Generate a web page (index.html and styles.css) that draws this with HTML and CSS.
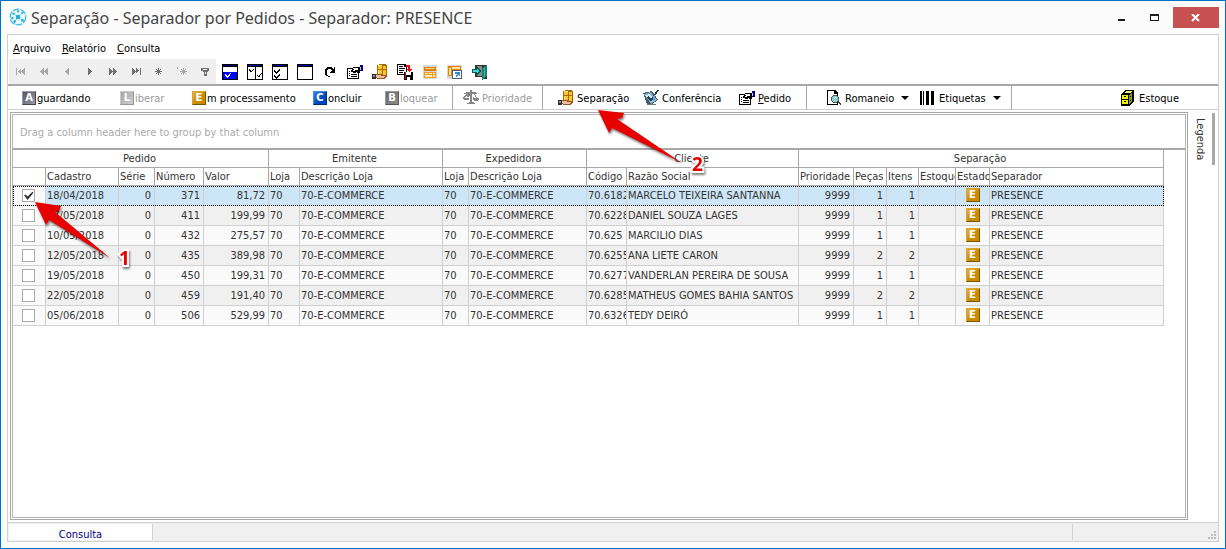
FILE: index.html
```html
<!DOCTYPE html>
<html lang="pt-BR">

<head>
    <meta charset="UTF-8">
    <meta name="viewport" content="width=device-width, initial-scale=1.0">
    <title>Separação - Separador por Pedidos</title>
    <link rel="stylesheet" href="styles.css">
</head>

<body>
    <svg class="sprite" aria-hidden="true">
        <symbol id="nav-first" viewBox="0 0 12 10"><path d="M1 1h1v7H1zM3 4h1V3h1V2h1v5H5V6H4V5H3zM6 4h1V3h1V2h1v5H8V6H7V5H6zM9 1h1v7H9z" /></symbol>
        <symbol id="nav-prevpage" viewBox="0 0 12 10"><path d="M2 4h1V3h1V2h1V1h1v7H5V7H4V6H3V5H2zM6 4h1V3h1V2h1V1h1v7H9V7H8V6H7V5H6z" /></symbol>
        <symbol id="nav-prev" viewBox="0 0 12 10"><path d="M4 4h1V3h1V2h1V1h1v7H7V7H6V6H5V5H4z" /></symbol>
        <symbol id="nav-next" viewBox="0 0 12 10"><path d="M4 1h1v1h1v1h1v1h1v1H7v1H6v1H5v1H4z" /></symbol>
        <symbol id="nav-nextpage" viewBox="0 0 12 10"><path d="M2 1h1v1h1v1h1v1h1v1H5v1H4v1H3v1H2zM6 1h1v1h1v1h1v1h1v1H9v1H8v1H7v1H6z" /></symbol>
        <symbol id="nav-last" viewBox="0 0 12 10"><path d="M2 1h1v1h1v1h1v1h1v1H5v1H4v1H3v1H2zM6 1h1v1h1v1h1v1H8v1H7v1H6zM10 1h1v7h-1z" /></symbol>
        <symbol id="nav-star" viewBox="0 0 12 10"><path d="M5 1h1v7H5zM2 4h7v1H2zM3 2h1v1H3zM7 2h1v1H7zM3 6h1v1H3zM7 6h1v1H7zM4 3h3v3H4z" /></symbol>
        <symbol id="nav-star-off" viewBox="0 0 12 10"><path d="M1 0h1v2H1zM7 1h1v7H7zM4 4h7v1H4zM5 2h1v1H5zM9 2h1v1H9zM5 6h1v1H5zM9 6h1v1H9zM6 3h3v3H6z" /></symbol>
        <symbol id="nav-filter" viewBox="0 0 12 10"><path fill-rule="evenodd" d="M2 1h8v3H9v1H8v4H5V5H4V4H2zM4 2v1h4V2zM6 5v2h1V5z" /></symbol>

        <symbol id="check-half" viewBox="0 0 16 16">
            <path fill="#000" d="M0 0h16v16H0z" /><path fill="#000080" d="M1 1h12v1H1z" /><path fill="#fff" d="M1 3h14v5H1z" /><path fill="#00f" d="M1 8h14v7H1z" />
            <path fill="#fff" d="M3 10h1v1h1v1h1v-1h1v-1h1V9h1v1H8v2H7v1H6v1H5v-1H4v-1H3z" />
        </symbol>
        <symbol id="check-cols" viewBox="0 0 16 16">
            <path fill="#000" d="M0 0h16v16H0z" /><path fill="#00a" d="M1 1h12v1H1z" /><path fill="#fff" d="M1 3h7v12H1zM9 3h6v12H9z" />
            <path fill="#000" d="M2 5h1v1h1v1h1V6h1V5h1v1H6v1H5v1H3V7H2zM10 11h1v1h1v-1h1v-1h1V9h1v1h-1v1h-1v2h-2v-1h-1z" />
        </symbol>
        <symbol id="check-list" viewBox="0 0 16 16">
            <path fill="#000" d="M0 0h16v16H0z" /><path fill="#00a" d="M1 1h12v1H1z" /><path fill="#fff" d="M1 3h14v12H1z" />
            <path fill="#000" d="M2 6h1v1h1v1h1V7h1V6h1V5h1v2H7v1H6v1H5v1H4V9H3V8H2zM2 11h1v1h1v1h1v-1h1v-1h1v-1h1v2H7v1H6v1H5v1H4v-1H3v-1H2z" />
        </symbol>
        <symbol id="blank" viewBox="0 0 16 16"><path fill="#000" d="M0 0h16v16H0z" /><path fill="#00a" d="M1 1h12v1H1z" /><path fill="#fff" d="M1 3h14v12H1z" /></symbol>
        <symbol id="refresh" viewBox="0 0 16 16">
            <path fill="#000" d="M5 3h5v1h1v1h1V3h1v6H8V8h1V7h1V6H9V5H6v1H5v5h1v1h2v1H6v-1H4v-1H3V5h1V4h1z" />
        </symbol>
        <symbol id="props" viewBox="0 0 16 16">
            <path fill="#000" d="M0 4h6V3h7v6h-1v6H0z" /><path fill="#fff" d="M1 5h4v1H4v2h5l2 2v4H1z" />
            <path fill="#000" d="M2 7h1v1H2zM2 9h1v1H2zM2 11h1v1H2zM4 10h6v1H4zM4 12h6v1H4z" /><path fill="#fff" d="M6 4h5v3H6z" />
            <path fill="#000" d="M5 5h2v1H5zM8 6h4v1H8zM6 8h3v1H6z" /><path fill="#000080" d="M13 1h3v6h-3z" /><path fill="#ccc" d="M13 3h1v3h-1z" />
        </symbol>
        <symbol id="hand" viewBox="0 0 16 16">
            <path fill="#a66a00" d="M5 1l3-1h4l3 1v10l-2 2H8l-3-1z" /><path fill="#ffc526" d="M6 1h4v4H6zM6 6h4v5H6zM11 2h3v3h-3zM11 6h3v5h-3z" /><path fill="#ffeb90" d="M6 1h4v1H6zM6 6h1v4H6z" />
            <path fill="#303030" d="M0 10h4v5H0z" /><path fill="#8794a8" d="M1 11h2v2H1z" /><path fill="#9a5330" d="M4 10h5l2 1h3l1 1-2 3H6l-2-1z" /><path fill="#f3bd98" d="M4 11h4l2 1h3l-1 2H6l-2-1z" />
        </symbol>
        <symbol id="save-doc" viewBox="0 0 16 16">
            <path fill="#000" d="M0 0h8l2 2v9H0z" /><path fill="#fff" d="M1 1h6v2h2v7H1z" /><path fill="#000" d="M2 2h4v1H2zM2 4h6v1H2zM2 6h5v1H2zM2 8h4v1H2z" />
            <path fill="#f00" d="M9 1h4v4h2l-3 3-3-3h2V3H9z" /><path fill="#000" d="M7 8h9v8H7z" /><path fill="#fff" d="M9 8h5v3H9zM10 13h3v3h-3z" /><path fill="#e00" d="M8 8h1v7H8z" />
        </symbol>
        <symbol id="grid-orange" viewBox="0 0 16 16">
            <path fill="#d7d7d7" d="M1 1h14v14H1z" /><path fill="#dc7d08" d="M2 3h12v4H2z" /><path fill="#ffd67c" d="M3 4h10v1H3z" />
            <path fill="#f29b27" d="M2 8h12v6H2z" /><path fill="#fff0bf" d="M3 9h3v1H3zM7 9h3v1H7zM11 9h2v1h-2zM3 11h7v2H3zM11 11h2v2h-2z" />
        </symbol>
        <symbol id="grid-window" viewBox="0 0 16 16">
            <path fill="#d7d7d7" d="M0 1h15v14H0z" /><path fill="#e1860b" d="M1 2h13v10H1z" /><path fill="#ffe19a" d="M2 4h2v7H2zM5 3h8v2H5z" /><path fill="#45617e" d="M5 6h10v9H5z" />
            <path fill="#fff" d="M6 7h8v7H6z" /><path fill="#3387d5" d="M8 8h5v4h-1v-2l-3 3-1-1 2-2H8z" />
        </symbol>
        <symbol id="exit" viewBox="0 0 16 16">
            <path fill="#303030" d="M3 1h12v14h-3v-2H3z" /><path fill="#888" d="M4 2h6v10H4z" /><path fill="#168475" d="M10 4l5-3v11l-5 4z" /><path fill="#5aa" d="M12 4l1-1v9l-1 1z" />
            <path fill="#07594f" d="M0 5h4V2l5 5-5 5V9H0z" /><path fill="#42d5df" d="M1 6h4V5l2 2-2 2V8H1z" />
        </symbol>
        <symbol id="scale" viewBox="0 0 16 16"><path fill="#858585" d="M7 0h2v2h3l2 1v1h-2l2 4h2v2l-2 1h-3l-1-2 2-4-3-1v8l3 1v1H4v-1l3-1V6L5 7l1 2-1 1H2L0 9V8l3-4H1V3l3-1h3zM4 5L2 8h3zM12 5l-2 3h3z" /></symbol>
        <symbol id="audit" viewBox="0 0 16 16">
            <path fill="#465c6c" d="M0 3l9-2 6 9-7 5-4-1z" /><path fill="#78aecd" d="M1 4l7-2 6 8-6 4z" /><path fill="#d6edf9" d="M2 5l5-1 4 6-3 2z" /><path fill="#293b48" d="M5 6l3 3 6-9h2L9 11H7L4 7z" />
            <path fill="#5fa8e5" d="M10 7l2-3v4l-2 3z" /><path fill="#657989" d="M4 14h9v1H4z" />
        </symbol>
        <symbol id="preview" viewBox="0 0 16 16">
            <path fill="#000" d="M1 0h8l3 3v12H1z" /><path fill="#fff" d="M2 1h6v3h3v10H2z" /><circle cx="9" cy="9" r="4" fill="#555" /><circle cx="9" cy="9" r="3" fill="#8bd1d4" />
            <path fill="#444" d="M12 11l3 3-1 1-3-3z" /><path fill="#eff" d="M7 8l3-1v1L8 9z" />
        </symbol>
        <symbol id="barcode" viewBox="0 0 16 16"><path fill="#000" d="M0 1h2v14H0zM3 1h1v14H3zM6 1h3v14H6zM11 1h3v14h-3z" /></symbol>
        <symbol id="cabinet" viewBox="0 0 16 16">
            <path fill="#000" d="M1 4l5-4h8v12l-5 4H1z" /><path fill="#ee0" d="M2 5h6v4H2zM2 10h6v4H2z" /><path fill="#990" d="M9 5l3-3v9l-3 3z" /><path fill="#ff7" d="M4 3l3-2h5l-2 2z" />
            <path fill="#000" d="M4 6h2v1H4zM4 11h2v1H4zM10 6h1v1h-1zM10 10h1v1h-1z" />
        </symbol>
    </svg>

    <div class="window">
        <header class="titlebar">
            <svg class="app-icon" viewBox="0 0 16 16">
                <circle cx="8" cy="8" r="7" fill="#e9f9fd" stroke="#35b9da" stroke-width="1" stroke-dasharray="6 1" />
                <path d="M8 8L4 5M8 8l4-4M8 8l4 3M8 8l-3 4" stroke="#35b9da" stroke-width="0.6" />
                <g fill="#20add2"><circle cx="8" cy="8" r="2" /><circle cx="4" cy="5" r="1" /><circle cx="12" cy="4" r="1" /><circle cx="12" cy="11" r="1.2" /><circle cx="5" cy="12" r="1.2" /><circle cx="3" cy="9" r="1" /><circle cx="8" cy="3" r="1" /></g>
            </svg>
            <h1>Separação - Separador por Pedidos - Separador: PRESENCE</h1>
            <button class="win-button" aria-label="Minimizar"><svg viewBox="0 0 10 8"><path fill="#1c1c1c" d="M1 5h7v2H1z" /></svg></button>
            <button class="win-button" aria-label="Maximizar"><svg viewBox="0 0 10 8"><path fill="#1c1c1c" fill-rule="evenodd" d="M0 0h9v7H0zM1 2v4h7V2z" /></svg></button>
            <button class="win-button close" aria-label="Fechar"><svg viewBox="0 0 10 8"><path stroke="#fff" stroke-width="2" d="M1 0l7 7M8 0L1 7" /></svg></button>
        </header>

        <main class="client">
            <nav class="menu">
                <a href="#"><u>A</u>rquivo</a>
                <a href="#"><u>R</u>elatório</a>
                <a href="#"><u>C</u>onsulta</a>
            </nav>

            <div class="toolbar">
                <div class="navigator">
                    <button class="off" aria-label="Primeiro"><svg><use href="#nav-first" /></svg></button>
                    <button class="off" aria-label="Página anterior"><svg><use href="#nav-prevpage" /></svg></button>
                    <button class="off" aria-label="Anterior"><svg><use href="#nav-prev" /></svg></button>
                    <button aria-label="Próximo"><svg><use href="#nav-next" /></svg></button>
                    <button aria-label="Próxima página"><svg><use href="#nav-nextpage" /></svg></button>
                    <button aria-label="Último"><svg><use href="#nav-last" /></svg></button>
                    <button aria-label="Marcar"><svg><use href="#nav-star" /></svg></button>
                    <button class="off" aria-label="Ir para marca"><svg><use href="#nav-star-off" /></svg></button>
                    <button aria-label="Filtrar"><svg><use href="#nav-filter" /></svg></button>
                </div>
                <div class="tools">
                    <button aria-label="Marcar selecionados"><svg class="icon"><use href="#check-half" /></svg></button>
                    <button aria-label="Inverter"><svg class="icon"><use href="#check-cols" /></svg></button>
                    <button aria-label="Marcar todos"><svg class="icon"><use href="#check-list" /></svg></button>
                    <button aria-label="Desmarcar todos"><svg class="icon"><use href="#blank" /></svg></button>
                    <button aria-label="Atualizar"><svg class="icon"><use href="#refresh" /></svg></button>
                    <button aria-label="Propriedades"><svg class="icon"><use href="#props" /></svg></button>
                    <button aria-label="Separar"><svg class="icon"><use href="#hand" /></svg></button>
                    <button aria-label="Exportar"><svg class="icon"><use href="#save-doc" /></svg></button>
                    <button aria-label="Grade"><svg class="icon"><use href="#grid-orange" /></svg></button>
                    <button aria-label="Layout"><svg class="icon"><use href="#grid-window" /></svg></button>
                    <button aria-label="Sair"><svg class="icon"><use href="#exit" /></svg></button>
                </div>
            </div>

            <div class="actions">
                <div class="group states">
                    <button><span class="badge badge-a">A</span>guardando</button>
                    <button disabled><span class="badge badge-l">L</span>iberar</button>
                    <button><span class="badge badge-e">E</span>m processamento</button>
                    <button><span class="badge badge-c">C</span>oncluir</button>
                    <button disabled><span class="badge badge-b">B</span>loquear</button>
                </div>
                <div class="group priority">
                    <button disabled><svg class="icon"><use href="#scale" /></svg><span>Prioridade</span></button>
                </div>
                <div class="group process">
                    <button><svg class="icon"><use href="#hand" /></svg><span>Separação</span></button>
                    <button><svg class="icon"><use href="#audit" /></svg><span>Conferência</span></button>
                    <button><svg class="icon"><use href="#props" /></svg><span><u>P</u>edido</span></button>
                </div>
                <div class="group print">
                    <button><svg class="icon"><use href="#preview" /></svg><span>Romaneio</span><i class="caret"></i></button>
                    <button><svg class="icon"><use href="#barcode" /></svg><span>Etiquetas</span><i class="caret"></i></button>
                </div>
                <div class="group stock">
                    <button><svg class="icon"><use href="#cabinet" /></svg><span>Estoque</span></button>
                </div>
            </div>

            <div class="content">
                <section class="grid">
                    <div class="grid-inner">
                        <div class="group-panel">Drag a column header here to group by that column</div>
                        <table>
                            <colgroup id="columns"></colgroup>
                            <thead>
                                <tr>
                                    <th colspan="5">Pedido</th>
                                    <th colspan="2">Emitente</th>
                                    <th colspan="2">Expedidora</th>
                                    <th colspan="2">Cliente</th>
                                    <th colspan="6">Separação</th>
                                </tr>
                                <tr class="fields">
                                    <th></th>
                                    <th>Cadastro</th>
                                    <th>Série</th>
                                    <th>Número</th>
                                    <th>Valor</th>
                                    <th>Loja</th>
                                    <th>Descrição Loja</th>
                                    <th>Loja</th>
                                    <th>Descrição Loja</th>
                                    <th>Código</th>
                                    <th>Razão Social</th>
                                    <th>Prioridade</th>
                                    <th>Peças</th>
                                    <th>Itens</th>
                                    <th>Estoque</th>
                                    <th>Estado</th>
                                    <th>Separador</th>
                                </tr>
                            </thead>
                            <tbody id="orders"></tbody>
                        </table>
                    </div>
                </section>
                <aside class="side"><button>Legenda</button></aside>
            </div>

            <footer class="status">
                <span class="status-main">Consulta</span>
                <span class="status-end">
                    <svg viewBox="0 0 8 8"><path fill="#bcbcbc" d="M6 0h2v2H6zM3 3h2v2H3zM6 3h2v2H6zM0 6h2v2H0zM3 6h2v2H3zM6 6h2v2H6z" /></svg>
                </span>
            </footer>
        </main>

        <div class="callout callout-one">
            <svg viewBox="0 0 80 62"><path d="M1 2L27 6 25 11 21 12 76 58 15 20 12 25z" /></svg>
            <b>1</b>
        </div>
        <div class="callout callout-two">
            <svg viewBox="0 0 90 62"><path d="M1 2L27 5 25 10 20 11 85 55 15 20 12 25z" /></svg>
            <b>2</b>
        </div>
    </div>

    <script>
        const widths = [33, 73, 36, 49, 65, 31, 143, 26, 118, 40, 172, 55, 33, 32, 37, 34, 174];
        document.getElementById("columns").innerHTML =
            widths.map(w => `<col style="width: ${w}px">`).join("");

        const orders = [
            { date: "18/04/2018", number: 371, value: "81,72", code: "70.6182", name: "MARCELO TEIXEIRA SANTANNA", items: 1, selected: true },
            { date: "07/05/2018", number: 411, value: "199,99", code: "70.6228", name: "DANIEL SOUZA LAGES", items: 1 },
            { date: "10/05/2018", number: 432, value: "275,57", code: "70.625", name: "MARCILIO DIAS", items: 1 },
            { date: "12/05/2018", number: 435, value: "389,98", code: "70.6255", name: "ANA LIETE CARON", items: 2 },
            { date: "19/05/2018", number: 450, value: "199,31", code: "70.6277", name: "VANDERLAN PEREIRA DE SOUSA", items: 1 },
            { date: "22/05/2018", number: 459, value: "191,40", code: "70.6285", name: "MATHEUS GOMES BAHIA SANTOS", items: 2 },
            { date: "05/06/2018", number: 506, value: "529,99", code: "70.6326", name: "TEDY DEIRÓ", items: 1 }
        ];

        document.getElementById("orders").innerHTML = orders.map(o => `
            <tr class="${o.selected ? "selected" : ""}">
                <td class="pick"><input type="checkbox" aria-label="Pedido ${o.number}" ${o.selected ? "checked" : ""}></td>
                <td>${o.date}</td>
                <td class="num">0</td>
                <td class="num">${o.number}</td>
                <td class="num">${o.value}</td>
                <td>70</td>
                <td>70-E-COMMERCE</td>
                <td>70</td>
                <td>70-E-COMMERCE</td>
                <td>${o.code}</td>
                <td>${o.name}</td>
                <td class="num">9999</td>
                <td class="num">${o.items}</td>
                <td class="num">${o.items}</td>
                <td></td>
                <td class="state"><span class="badge badge-e">E</span></td>
                <td>PRESENCE</td>
            </tr>
        `).join("");
    </script>
</body>

</html>
```

FILE: styles.css
```css
* {
    box-sizing: border-box;
}

body {
    margin: 0;
    font-family: 'DejaVu Sans Condensed', 'DejaVu Sans', sans-serif;
    font-size: 11px;
    color: #000;
}

.sprite {
    display: none;
}

svg {
    display: block;
    shape-rendering: crispEdges;
}

button {
    display: flex;
    align-items: center;
    padding: 0;
    border: none;
    background: none;
    font: inherit;
    color: inherit;
    white-space: nowrap;
}

.window {
    position: relative;
    display: flex;
    flex-direction: column;
    height: 100vh;
    padding: 0 6px 6px;
    border: 1px solid #0072c6;
    background-color: #fbfbfb;
}

/* title bar */
.titlebar {
    display: flex;
    height: 33px;
    padding-left: 2px;
}

.app-icon {
    width: 18px;
    height: 18px;
    margin-top: 7px;
    shape-rendering: auto;
}

.titlebar h1 {
    flex: 1;
    margin: 0 0 0 4px;
    font-family: 'Noto Sans', sans-serif;
    font-size: 16px;
    font-weight: normal;
    line-height: 34px;
    color: #444;
}

.win-button {
    justify-content: center;
    width: 33px;
    height: 21px;
    margin-top: 6px;
}

.win-button svg {
    width: 10px;
    height: 8px;
}

.win-button.close {
    width: 46px;
    margin-left: 2px;
    background-color: #c75050;
}

.win-button.close svg {
    shape-rendering: auto;
}

.client {
    flex: 1;
    display: flex;
    flex-direction: column;
    min-height: 0;
    border: 1px solid #d0d0d0;
    background-color: #fff;
}

/* menu */
.menu {
    display: flex;
    gap: 11px;
    height: 24px;
    padding-left: 5px;
    line-height: 28px;
}

.menu a {
    color: #000;
    text-decoration: none;
}

/* icon bar */
.toolbar {
    display: flex;
    height: 27px;
    padding-left: 1px;
    border-bottom: 2px solid #a8a8a8;
}

.navigator {
    display: flex;
    width: 207px;
    background-color: #efefef;
    color: #707070;
}

.navigator button {
    justify-content: center;
    width: 23px;
}

.navigator .off {
    color: #a8a8a8;
}

.navigator svg {
    width: 12px;
    height: 10px;
    fill: currentColor;
}

.tools {
    display: flex;
    padding-left: 1px;
}

.tools button {
    justify-content: center;
    width: 25px;
}

.icon {
    flex: none;
    width: 16px;
    height: 16px;
}

/* action bar */
.actions {
    display: flex;
    height: 24px;
}

.group {
    display: grid;
    flex: none;
    border-right: 1px solid #a8a8a8;
    border-bottom: 1px solid #d0d0d0;
}

.group .icon {
    margin-right: 3px;
}

.group button {
    padding-top: 1px;
}

.group button:disabled {
    color: #9a9a9a;
}

.states {
    grid-template-columns: 98px 72px 121px 72px auto;
    width: 445px;
    padding-left: 14px;
}

.priority {
    width: 90px;
    padding-left: 10px;
}

.process {
    grid-template-columns: 85px 96px auto;
    width: 264px;
    padding-left: 15px;
}

.print {
    grid-template-columns: 94px auto;
    width: 205px;
    padding-left: 19px;
}

.stock {
    flex: 1;
    padding-left: 108px;
    border-right: none;
}

.caret {
    margin-left: 7px;
    border: 4px solid transparent;
    border-top-color: #000;
    border-bottom: none;
}

.badge {
    display: inline-block;
    width: 14px;
    height: 14px;
    margin-right: 1px;
    border: 1px solid;
    font-family: 'DejaVu Sans', sans-serif;
    font-size: 10px;
    font-weight: bold;
    line-height: 12px;
    text-align: center;
    color: #fff;
}

.badge-a {
    border-color: #9a9aa5 #44444e #44444e #9a9aa5;
    background: linear-gradient(135deg, #555560, #9a9ab0);
}

.badge-l {
    border-color: #c8c8c8 #969696 #969696 #c8c8c8;
    background: linear-gradient(135deg, #a6a6a6, #cfcfcf);
}

.badge-e {
    border-color: #dda62a #7d5600 #7d5600 #dda62a;
    background: linear-gradient(135deg, #e2b040, #c88a00 60%);
}

.badge-c {
    border-color: #3f8be6 #002c80 #002c80 #3f8be6;
    background: linear-gradient(135deg, #3d7fe0, #0047bd 60%);
}

.badge-b {
    border-color: #999 #555 #555 #999;
    background: linear-gradient(135deg, #666, #8f8f8f);
}

/* grid */
.content {
    flex: 1;
    display: flex;
    min-height: 0;
    padding: 2px 1px 2px 2px;
}

.grid {
    flex: 1;
    min-width: 0;
    padding: 1px;
    border: 1px solid #a8a8a8;
}

.grid-inner {
    height: 100%;
    overflow: hidden;
    border: 1px solid #b4b4b4;
}

.group-panel {
    height: 35px;
    padding-left: 7px;
    border-bottom: 2px solid #a8a8a8;
    line-height: 35px;
    color: #aaa;
}

table {
    table-layout: fixed;
    width: 1151px;
    border-collapse: separate;
    border-spacing: 0;
    color: #333;
}

th, td {
    height: 20px;
    padding: 0 3px 0 1px;
    overflow: hidden;
    border-right: 1px solid #d0d0d0;
    border-bottom: 1px solid #d0d0d0;
    line-height: 19px;
    text-align: left;
    font-weight: normal;
    white-space: nowrap;
}

th {
    height: 18px;
    border-color: #a8a8a8;
    line-height: 17px;
    text-align: center;
}

.fields th {
    padding-right: 0;
    text-align: left;
}

tbody tr {
    background-color: #fafafa;
}

tbody tr:nth-child(even) {
    background-color: #f0f0f0;
}

tbody tr.selected {
    background-color: #cde6f7;
    outline: 1px dotted #000;
    outline-offset: -1px;
}

.num {
    text-align: right;
}

td.pick {
    padding: 0;
    background-color: #fafafa;
}

td.state {
    padding: 0;
}

.state .badge {
    display: block;
    margin: 0 auto 1px;
}

.pick input {
    display: block;
    appearance: none;
    width: 13px;
    height: 13px;
    margin: 0 0 0 9px;
    border: 1px solid #aaa;
    background-color: #fff;
}

.pick input:checked::before {
    content: "";
    display: block;
    width: 11px;
    height: 11px;
    background-color: #333;
    clip-path: polygon(10% 50%, 25% 40%, 42% 60%, 85% 15%, 95% 25%, 42% 90%);
}

/* side tab */
.side {
    width: 29px;
    padding: 1px 1px 0 0;
}

.side button {
    width: 27px;
    height: 52px;
    padding: 0;
    border-right: 3px solid #a8a8a8;
    writing-mode: vertical-rl;
    justify-content: center;
    color: #333;
}

/* status bar */
.status {
    display: flex;
    justify-content: space-between;
    height: 19px;
    padding: 1px;
    border-top: 1px solid #d0d0d0;
    background-color: #f0f0f0;
}

.status-main {
    width: 144px;
    border-right: 1px solid #d0d0d0;
    background-color: #fff;
    line-height: 21px;
    text-align: center;
    color: #000080;
}

.status-end {
    display: flex;
    justify-content: flex-end;
    align-items: flex-end;
    width: 145px;
    padding: 0 1px 1px 0;
    border-left: 1px solid #d0d0d0;
}

.status-end svg {
    width: 8px;
    height: 8px;
}

/* numbered arrows over the screen */
.callout {
    position: absolute;
    display: flex;
    align-items: flex-end;
    pointer-events: none;
    filter: drop-shadow(1px 2px 1px rgba(0, 0, 0, 0.5));
}

.callout svg {
    height: 62px;
    fill: #e60000;
    shape-rendering: auto;
}

.callout b {
    font-family: 'Open Sans', sans-serif;
    font-size: 19px;
    line-height: 20px;
    color: #e60000;
    -webkit-text-stroke: 4px #fff;
    paint-order: stroke fill;
}

.callout-one {
    top: 199px;
    left: 33px;
}

.callout-one svg {
    width: 80px;
}

.callout-one b {
    margin: 0 0 -6px 5px;
}

.callout-two {
    top: 107px;
    left: 596px;
}

.callout-two svg {
    width: 90px;
}

.callout-two b {
    margin: 0 0 -4px 5px;
}
```
